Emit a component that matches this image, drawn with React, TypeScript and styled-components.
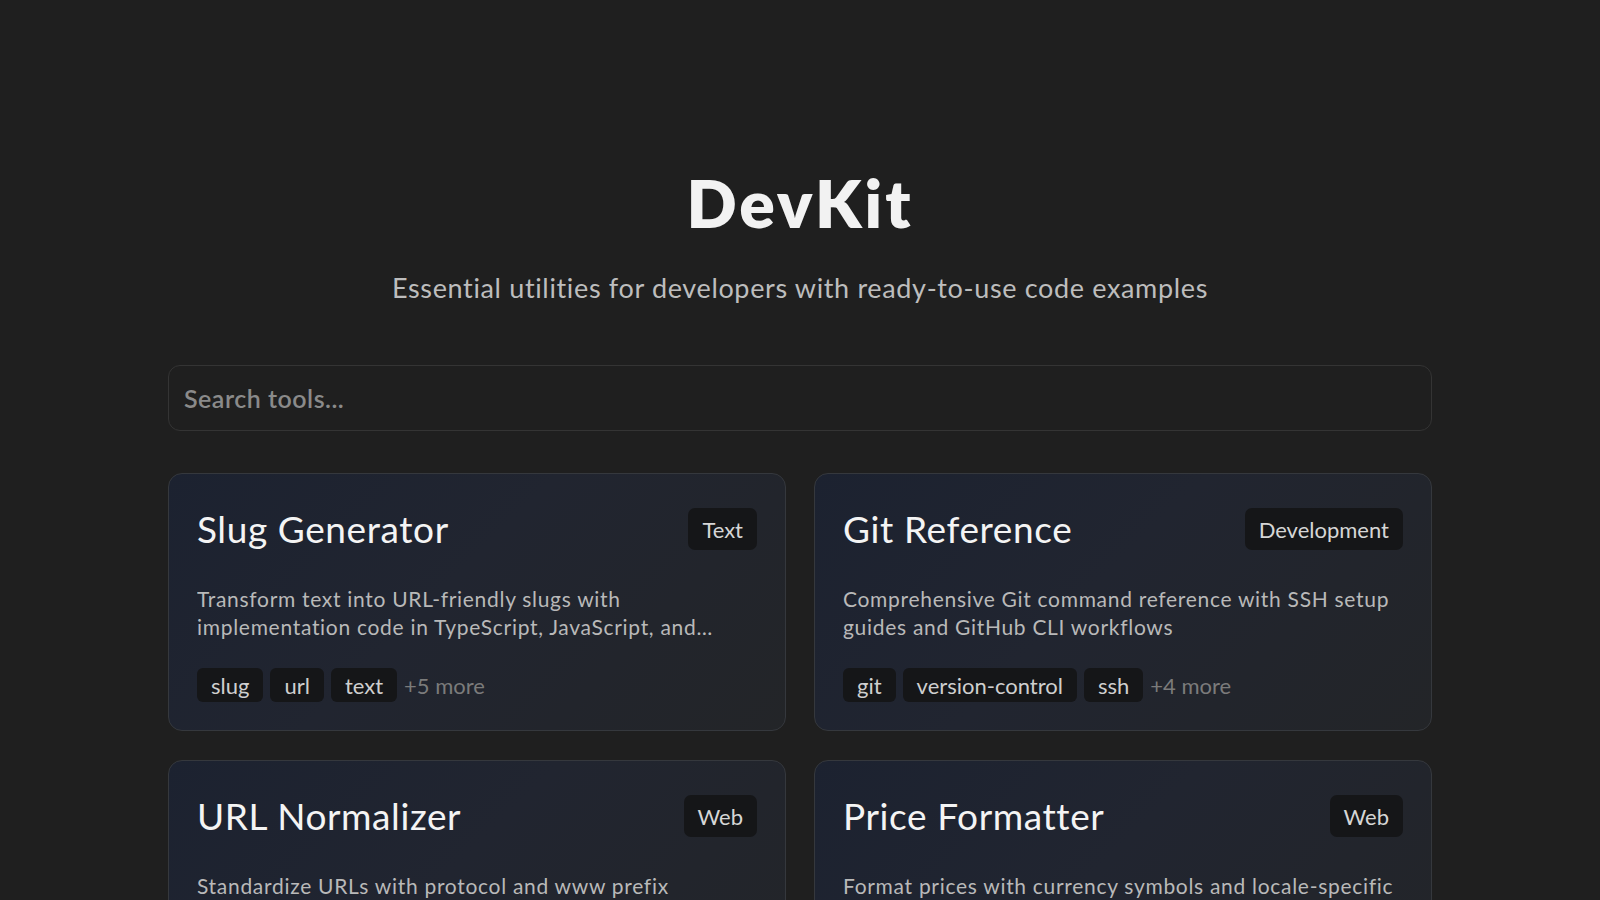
import styled, { createGlobalStyle } from "styled-components";

type Tool = {
  name: string;
  category: string;
  description: string;
  tags: string[];
  more: number;
};

const tools: Tool[] = [
  {
    name: "Slug Generator",
    category: "Text",
    description:
      "Transform text into URL-friendly slugs with implementation code in TypeScript, JavaScript, and…",
    tags: ["slug", "url", "text"],
    more: 5,
  },
  {
    name: "Git Reference",
    category: "Development",
    description:
      "Comprehensive Git command reference with SSH setup guides and GitHub CLI workflows",
    tags: ["git", "version-control", "ssh"],
    more: 4,
  },
  {
    name: "URL Normalizer",
    category: "Web",
    description:
      "Standardize URLs with protocol and www prefix normalization rules",
    tags: ["url", "normalize", "web"],
    more: 3,
  },
  {
    name: "Price Formatter",
    category: "Web",
    description:
      "Format prices with currency symbols and locale-specific formatting",
    tags: ["price", "currency", "format"],
    more: 2,
  },
];

const GlobalStyle = createGlobalStyle`
  html, body {
    margin: 0;
    padding: 0;
    background: #1f1f1f;
  }
  body {
    font-family: Lato, "Noto Sans", sans-serif;
    color: #f2f2f2;
  }
  * { box-sizing: border-box; }
`;

const Page = styled.main`
  width: 1264px;
  margin: 0 auto;
  padding: 163px 0 60px;
`;

const Hero = styled.header`
  display: flex;
  flex-direction: column;
  align-items: center;
`;

const Title = styled.h1`
  margin: 0;
  font-size: 66px;
  line-height: 80px;
  font-weight: 800;
  color: #f2f2f2;
  letter-spacing: 3px;
`;

const Subtitle = styled.p`
  margin: 27px 0 0;
  font-size: 27px;
  line-height: 36px;
  letter-spacing: 0.65px;
  color: #bdbdbd;
`;

const Search = styled.input`
  display: block;
  width: 100%;
  height: 66px;
  margin-top: 59px;
  padding: 0 15px;
  border: 1px solid #343434;
  border-radius: 12px;
  background: #1f1f1f;
  font-family: inherit;
  font-size: 25px;
  font-weight: 600;
  letter-spacing: 0.5px;
  color: #e0e0e0;
  outline: none;

  &::placeholder {
    color: #8a8a8a;
  }
`;

const Grid = styled.section`
  display: grid;
  grid-template-columns: 1fr 1fr;
  gap: 29px 28px;
  margin-top: 42px;
`;

const Card = styled.article`
  display: flex;
  flex-direction: column;
  padding: 28px;
  border: 1px solid #35383d;
  border-radius: 14px;
  background: linear-gradient(135deg, #1c2230 0%, #212530 45%, #232528 100%);
`;

const CardHeader = styled.div`
  display: flex;
  align-items: center;
  justify-content: space-between;
  height: 54px;
`;

const CardTitle = styled.h2`
  margin: 0;
  font-size: 37px;
  line-height: 54px;
  font-weight: 400;
  letter-spacing: 0.6px;
  color: #f4f4f4;
`;

const Category = styled.span`
  display: inline-flex;
  align-items: center;
  height: 42px;
  padding: 0 14px;
  border-radius: 7px;
  background: #151618;
  font-size: 22px;
  color: #d6d6d6;
`;

const Description = styled.p`
  margin: 29px 0 0;
  font-size: 21px;
  line-height: 28px;
  letter-spacing: 0.7px;
  color: #b9b9b9;
  display: -webkit-box;
  -webkit-line-clamp: 2;
  -webkit-box-orient: vertical;
  overflow: hidden;
`;

const Tags = styled.div`
  display: flex;
  align-items: center;
  gap: 7px;
  margin-top: 27px;
`;

const Tag = styled.span`
  display: inline-flex;
  align-items: center;
  height: 34px;
  padding: 0 14px;
  border-radius: 6px;
  background: #151618;
  font-size: 22px;
  color: #cfcfcf;
`;

const More = styled.span`
  font-size: 22px;
  color: #7b7b7b;
`;

function ToolCard({ tool }: { tool: Tool }) {
  return (
    <Card>
      <CardHeader>
        <CardTitle>{tool.name}</CardTitle>
        <Category>{tool.category}</Category>
      </CardHeader>
      <Description>{tool.description}</Description>
      <Tags>
        {tool.tags.map((t) => (
          <Tag key={t}>{t}</Tag>
        ))}
        <More>+{tool.more} more</More>
      </Tags>
    </Card>
  );
}

export default function App() {
  return (
    <>
      <GlobalStyle />
      <Page>
        <Hero>
          <Title>DevKit</Title>
          <Subtitle>
            Essential utilities for developers with ready-to-use code examples
          </Subtitle>
        </Hero>
        <Search placeholder="Search tools..." />
        <Grid>
          {tools.map((tool) => (
            <ToolCard key={tool.name} tool={tool} />
          ))}
        </Grid>
      </Page>
    </>
  );
}
